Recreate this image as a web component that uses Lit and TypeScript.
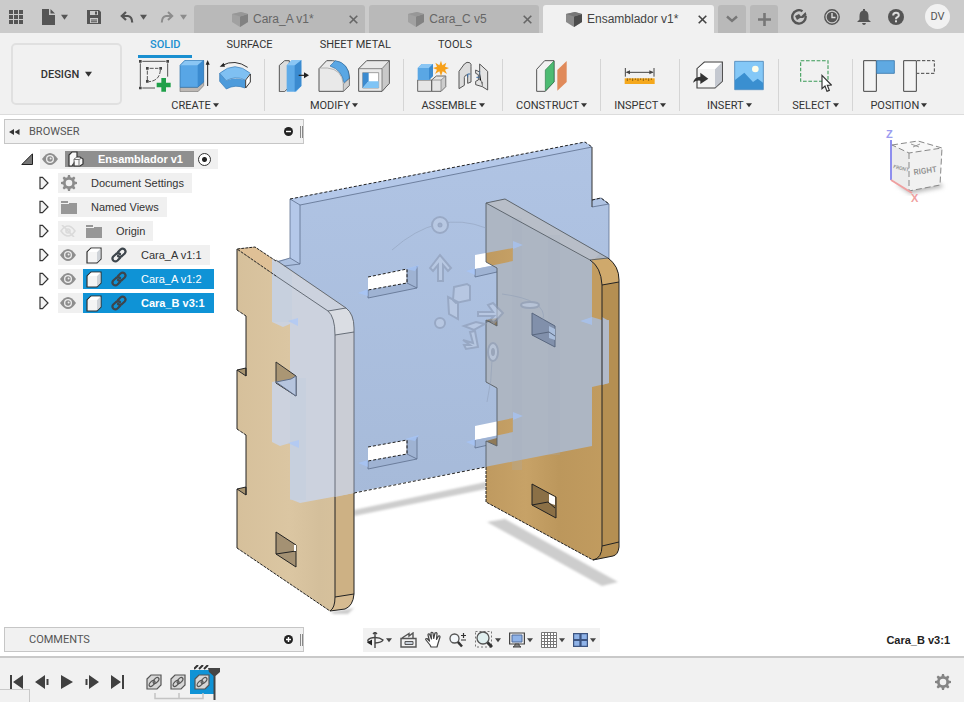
import { LitElement, html, svg, css, nothing, TemplateResult } from "lit";
import { customElement, property, state } from "lit/decorators.js";
import { classMap } from "lit/directives/class-map.js";

const icon = (w: number, h: number, viewBox: string, body: unknown) =>
  html`<svg width=${w} height=${h} viewBox=${viewBox} aria-hidden="true">${body}</svg>`;

const caret = (size = 7) => icon(size, 6, "0 0 8 6", svg`<path d="M0 0.5H8L4 6Z" fill="currentColor"/>`);

const gearPath =
  "M7 0h2l.5 2.2 1.500.6 2-1.200 1.400 1.400-1.200 2 .6 1.500 2.200.5v2l-2.200.5-.6 1.500 1.200 2-1.400 1.400-2-1.200-1.500.6L9 16H7l-.5-2.200-1.500-.6-2 1.200-1.400-1.400 1.200-2-.6-1.500L0 9V7l2.200-.5.6-1.500-1.200-2L3 1.600l2 1.200 1.500-.6ZM8 4.700a3.300 3.300 0 1 0 0 6.600a3.300 3.300 0 0 0 0-6.600Z";

const gear = (size: number) =>
  icon(size, size, "0 0 16 16", svg`<path fill="currentColor" fill-rule="evenodd" d=${gearPath}/>`);

/* ---------- top bar icons ---------- */
const gridIcon = icon(14, 14, "0 0 14 14", svg`<path fill="currentColor" d="M0 0h4v4H0zM5 0h4v4H5zM10 0h4v4h-4zM0 5h4v4H0zM5 5h4v4H5zM10 5h4v4h-4zM0 10h4v4H0zM5 10h4v4H5zM10 10h4v4h-4z"/>`);
const fileIcon = icon(13, 16, "0 0 13 16", svg`<path fill="currentColor" d="M0 0H7V6H13V16H0ZM8.500 0L13 4.500H8.500Z"/>`);
const saveIcon = icon(14, 14, "0 0 14 14", svg`<path fill="currentColor" fill-rule="evenodd" d="M0 0H12L14 2V14H0ZM3 1V5H11V1ZM3 8V13H11V8ZM8 1.500h2v3H8ZM4 9.500h6v1H4ZM4 11.300h6v1H4Z"/>`);
const undoIcon = icon(14, 12, "0 0 14 12", svg`<path fill="none" stroke="currentColor" stroke-width="2.200" d="M6 1L1.800 5L6 9M2 5H8Q12 5.500 12.200 11.500"/>`);
const redoIcon = icon(14, 12, "0 0 14 12", svg`<path fill="none" stroke="currentColor" stroke-width="2" d="M8 1L12.200 5L8 9M12 5H6Q2 5.500 1.800 11.500"/>`);
const docIcon = icon(16, 15, "0 0 16 15", svg`<path fill="#8a8a8a" d="M0 2L9 0L16 2V10L8 15L0 10Z"/><path fill="#4c4c4c" d="M8 4.500L16 2V10L8 15Z"/><path fill="#777" d="M0 2L9 0L16 2L8 4.500Z"/>`);
const crossIcon = icon(9, 9, "0 0 9 9", svg`<path stroke="currentColor" stroke-width="1.600" d="M.7.7L8.300 8.300M8.300.7L.7 8.300"/>`);
const chevronIcon = icon(12, 8, "0 0 12 8", svg`<path fill="none" stroke="currentColor" stroke-width="2.400" d="M1 1.500L6 6L11 1.500"/>`);
const plusIcon = icon(13, 13, "0 0 13 13", svg`<path stroke="currentColor" stroke-width="2.600" d="M6.500 0V13M0 6.500H13"/>`);
const syncIcon = icon(16, 16, "0 0 16 16", svg`<path fill="none" stroke="currentColor" stroke-width="2.400" d="M11.500 2.200A6.700 6.700 0 1 0 14.600 7"/><path fill="currentColor" d="M4 7L8 5L10 7.500L14.500 3L15.500 6L12 9L9 9L6 11Z"/>`);
const clockIcon = icon(16, 16, "0 0 16 16", svg`<circle cx="8" cy="8" r="7.200" fill="none" stroke="currentColor" stroke-width="1.400"/><circle cx="8" cy="8" r="5.300" fill="currentColor"/><path fill="none" stroke="#ddd" stroke-width="1.400" d="M8 4V8.500H11.500"/>`);
const bellIcon = icon(14, 16, "0 0 14 16", svg`<path fill="currentColor" d="M6 0H8V1.600Q11.500 2.500 11.500 7V10.500L14 13H0L2.500 10.500V7Q2.500 2.500 6 1.600ZM5 14H9Q8.500 16 7 16T5 14Z"/>`);
const helpIcon = icon(16, 16, "0 0 16 16", svg`<circle cx="8" cy="8" r="8" fill="currentColor"/><path fill="none" stroke="#ddd" stroke-width="2" d="M5.200 6.500Q5.200 3.800 8 3.800T10.800 6.200Q10.800 7.500 9 8.400Q8 9 8 10.200"/><rect x="7" y="11.300" width="2" height="2" fill="#ddd"/>`);

/* ---------- ribbon icons, drawn on a 96-unit grid ---------- */
const tool = (body: unknown) => icon(32, 32, "0 0 96 96", body);
const edge = "#555";

const sketchTool = tool(svg`
  <path fill="none" stroke="#555" stroke-width="3" d="M4 10V80M10 4H80M86 10V50M10 84H48"/>
  <path fill="none" stroke="#555" stroke-width="3" d="M25 32V62M32 25H58M64 30Q62 62 30 65" stroke-dasharray="12 4"/>
  <path fill="#444" d="M0 0h8v8H0zM82 0h8v8h-8zM0 80h8v8H0zM21 21h8v8h-8zM61 21h8v8h-8zM21 60h8v8h-8z"/>
  <path fill="#1fa049" d="M67 54H81V68H95V82H81V95H67V82H53V68H67Z"/>`);
const extrudeTool = tool(svg`
  <path fill="#bdb8b4" stroke="#777" stroke-width="2" d="M3 82H55L74 66V77L57 95H3Z"/>
  <path fill="#58a6e6" d="M3 16L18 0H74V66L56 82H3Z"/><path fill="#8ac6f4" d="M3 16L18 0H74L56 16Z"/>
  <path fill="#3b8bd0" d="M56 16L74 0V66L56 82Z"/><path fill="none" stroke="#2f6fa8" stroke-width="2" d="M3 16L18 1H74V66L56 82H3Z"/>
  <path stroke="#222" stroke-width="3" d="M86 10V78"/><path fill="#222" d="M86 0L92 14H80Z"/>`);
const revolveTool = tool(svg`
  <path fill="#4d9bdb" d="M2 40V64L22 87Q48 72 78 84V60Q50 50 22 62Z"/>
  <path fill="#7fc0f2" d="M2 40Q48 0 94 40L78 60Q50 46 22 62Z"/>
  <path fill="#fff" stroke="#333" stroke-width="3" d="M94 42V66L80 84V60Z"/>
  <path fill="none" stroke="#3579b5" stroke-width="2" d="M2 40V64L22 87Q48 72 78 84M2 40Q48 0 94 40M2 40L22 62Q50 46 78 60"/>
  <path fill="none" stroke="#333" stroke-width="3" d="M10 16Q48 -4 86 22"/><path fill="#222" d="M2 20L14 8L18 20Z"/>`);
const pressTool = tool(svg`
  <path fill="#ddd" stroke="#555" stroke-width="3" d="M4 95V16L20 2H34V80L20 95Z"/>
  <path fill="#5fabe8" d="M26 16L42 0H70V78L54 95H26Z"/><path fill="#3b8bd0" d="M50 16L70 0V78L50 95Z"/><path fill="#8ac6f4" d="M26 16L42 0H70L50 16Z"/>
  <path stroke="#222" stroke-width="3.500" d="M62 46H82"/><path fill="#222" d="M93 46L78 37V55Z"/>`);
const filletTool = tool(svg`
  <path fill="#e9e9e9" stroke="${edge}" stroke-width="3" d="M3 94V26L26 2H44Q94 6 95 58V76L76 94Z"/>
  <path fill="#cfcfcf" stroke="#777" stroke-width="2" d="M76 94V72L94 56V76Z"/>
  <path fill="none" stroke="#999" stroke-width="2" d="M6 24H28Q72 28 76 72"/>
  <path fill="#5aa7e4" stroke="#2f6fa8" stroke-width="2" d="M36 18L52 2Q92 8 94 54L78 68Q72 30 36 18Z"/>`);
const shellTool = tool(svg`
  <path fill="#e9e9e9" stroke="${edge}" stroke-width="3" d="M2 26L26 2H94V70L72 94H2Z"/>
  <path fill="#c9c9c9" stroke="${edge}" stroke-width="2" d="M72 26L94 2V70L72 94Z"/><path stroke="${edge}" stroke-width="2" d="M2 26H72"/>
  <path fill="#fff" stroke="#777" stroke-width="2" d="M14 38H62V84H14Z"/><path fill="#3b8bd0" d="M14 38H32V64L14 84Z"/><path fill="#7fc4f5" d="M32 64H62V84H14Z"/>`);
const componentTool = tool(svg`
  <path fill="#e6e6e6" stroke="#666" stroke-width="3" d="M2 60H44V94H2ZM44 60L58 48H86V80L72 94H44Z"/>
  <path fill="#ccc" stroke="#777" stroke-width="2" d="M72 60L86 48V80L72 94ZM72 60H44"/>
  <path fill="#5aa7e4" d="M2 24L14 12H48V48L36 60H2Z"/><path fill="#8ac6f4" d="M2 24L14 12H48L36 24Z"/><path fill="#3b8bd0" d="M36 24L48 12V48L36 60Z"/>
  <path fill="#f6a01a" d="M72 2L76 16L88 8L84 20L96 24L84 29L90 42L77 34L72 48L67 34L54 42L60 29L48 24L60 20L55 8L67 16Z"/>`);
const jointTool = tool(svg`
  <g stroke="#555" stroke-width="3"><path fill="#dcdcdc" d="M6 86V34L22 12Q30 4 38 8Q44 12 42 20V66L32 70V44Q24 44 22 52V76Z"/>
  <path fill="#e4e4e4" d="M56 30L68 36V12L92 34V90L76 80L56 74V64L64 60V44L56 40Z"/></g>
  <path fill="none" stroke="#3b6fa8" stroke-width="3" d="M40 42H32V52M68 34V52H58"/><path stroke="#777" stroke-width="2" d="M68 36V60L76 66V80"/>`);
const planeTool = tool(svg`
  <path fill="#f2f2f2" stroke="#555" stroke-width="3" d="M2 94V28L26 2H54V66L28 94Z"/>
  <path fill="#4dbb72" stroke="#2f7d4b" stroke-width="2" d="M28 92V30L54 3V66Z"/><path fill="#e08a5a" d="M64 92V30L92 3V66Z"/>`);
const measureTool = tool(svg`
  <path stroke="#444" stroke-width="3" d="M4 24V50M90 24V50M8 37H86"/><path fill="#444" d="M5 37L18 31V43ZM89 37L76 31V43Z"/>
  <path fill="#f5a81c" d="M2 55H92V72H2Z"/><path stroke="#7d5510" stroke-width="2.500" d="M10 55v8M18 55v5M26 55v8M34 55v5M42 55v8M50 55v5M58 55v8M66 55v5M74 55v8M82 55v5"/>`);
const insertTool = tool(svg`
  <path fill="#f4f4f4" stroke="#444" stroke-width="3.500" d="M12 84V26L34 6H88V64L66 84Z"/><path fill="#c4c8d0" d="M66 28L86 8V64L66 83Z"/><path fill="#fff" d="M14 27L34 9H84L66 27Z"/>
  <path fill="#333" d="M0 68Q4 50 22 50V38L46 56L22 72V62Q10 60 0 68Z"/>`);
const imageTool = tool(svg`
  <path fill="#84c8f7" stroke="#4a86b8" stroke-width="2.500" d="M5 4H91V89H5Z"/><path fill="#3a8fd0" d="M6 60L34 38L60 66L74 56L90 68V88H6Z"/><circle cx="67" cy="27" r="10" fill="#fffde8"/>`);
const selectTool = tool(svg`
  <path fill="none" stroke="#3a9b57" stroke-width="3.200" stroke-dasharray="11 5" d="M2 2H84V64H2Z"/>
  <path fill="#fff" stroke="#333" stroke-width="3.500" d="M66 46V86L75 78L81 94L88 91L82 76L94 75Z"/>`);
const captureTool = tool(svg`
  <path fill="#f4f4f4" stroke="#444" stroke-width="3" d="M2 2H40V94H2Z"/><path fill="#5fa9e2" stroke="#3a78ae" stroke-width="2.500" d="M41 2H94V40H41Z"/>`);
const revertTool = tool(svg`
  <path fill="#f4f4f4" stroke="#444" stroke-width="3" d="M2 2H40V94H2Z"/><path fill="none" stroke="#444" stroke-width="3" stroke-dasharray="10 5" d="M42 2H94V40H42"/>`);

/* ---------- browser icons ---------- */
const eyeIcon = icon(16, 12, "0 0 16 12", svg`<path fill="#8e8e8e" d="M0 6Q8 -6 16 6Q8 18 0 6Z"/><circle cx="8" cy="6" r="4" fill="#eee"/><circle cx="8" cy="6" r="2.700" fill="#8e8e8e"/><circle cx="8.600" cy="5.600" r="1" fill="#eee"/>`);
const eyeOffIcon = icon(16, 12, "0 0 16 12", svg`<g fill="none" stroke="#dadada" stroke-width="1.600"><path d="M1 6Q8 -4 15 6Q8 16 1 6Z"/><circle cx="8" cy="6" r="2"/><path d="M2 0L14 12"/></g>`);
const folderIcon = icon(16, 13, "0 0 16 13", svg`<path fill="#979797" d="M0 0H7V2H0ZM0 3H8V2H16V13H0Z"/>`);
const cubeIcon = icon(16, 17, "0 0 16 17", svg`<path fill="#f4f4f4" stroke="#333" stroke-width="1.200" d="M1 5L5 1H15V12L11 16H1Z"/><path fill="#cfd3d8" d="M11 5L14.500 1.500V12L11 15.500Z"/><path fill="#fff" d="M1.800 5L5 1.700H14L11 5Z"/>`);
const assemblyIcon = icon(16, 16, "0 0 16 16", svg`<path fill="#f8f8f8" stroke="#333" stroke-width="1.200" d="M1 15V4L4 1H9V6H12L15 8V13L12 15H6V12L4 15Z"/><path fill="none" stroke="#777" d="M6 14V8L9 6M6 8.500H11V15M11 8.500L14 7"/>`);
const linkIcon = icon(16, 16, "0 0 16 16", svg`<g fill="none" stroke="#3d454c" stroke-width="2.200" stroke-linecap="round"><path d="M7 5L9.500 2.500Q11.500.8 13.600 2.400Q15.500 4.500 13.700 6.500L11 9Q9 10.500 7 9"/><path d="M9 11L6.500 13.500Q4.500 15.200 2.400 13.600Q.5 11.500 2.300 9.500L5 7Q7 5.500 9 7"/></g>`);
const openTwist = icon(12, 12, "0 0 12 12", svg`<path fill="#777" stroke="#222" d="M11.500.8V11.500H.8Z"/>`);
const shutTwist = icon(10, 14, "0 0 10 14", svg`<path fill="#f4f4f4" stroke="#333" stroke-width="1.200" d="M1 1.300H3.500L9 7L3.500 12.700H1Z"/>`);
const rewindIcon = icon(11, 6, "0 0 11 6", svg`<path fill="#333" d="M5 0V6L0 3ZM10.500 0V6L5.500 3Z"/>`);
const minusDot = icon(9, 9, "0 0 9 9", svg`<circle cx="4.500" cy="4.500" r="4.500" fill="#222"/><path stroke="#fff" stroke-width="1.400" d="M2 4.500H7"/>`);
const plusDot = icon(9, 9, "0 0 9 9", svg`<circle cx="4.500" cy="4.500" r="4.500" fill="#222"/><path stroke="#fff" stroke-width="1.400" d="M2 4.500H7M4.500 2V7"/>`);

/* ---------- navigation icons ---------- */
const orbitIcon = icon(18, 16, "0 0 18 16", svg`<g fill="none" stroke="#444" stroke-width="1.400"><path d="M9 0V16M7 2L9 0L11 2"/><path d="M5 11Q1 10 2 8Q4 5.500 9 5.500T17 8Q16 10.500 9 11"/></g><path fill="#222" d="M1 10.500L6 7.500V13.500Z"/>`);
const lookIcon = icon(17, 16, "0 0 17 16", svg`<path fill="none" stroke="#555" stroke-width="1.400" d="M1 6.500H16V15H1ZM2 6L9 1.500V4L13 1V6"/><path fill="#c5cdd8" stroke="#555" d="M5 9.500H13V12.500H5Z"/>`);
const panIcon = icon(16, 17, "0 0 16 17", svg`<path fill="#fff" stroke="#444" stroke-width="1.200" stroke-linejoin="round" d="M5 14L1 9Q0 7.500 2 7.500L4.500 10L3 4Q3 2.500 4.500 3L6.500 8L6 2Q6.500.500 8 2L8.700 7.500L10 2Q11.500 1 12 2.500L11.500 8.500L13.500 5Q15 4.500 15 6L13 12.500L12 16H6Z"/>`);
const zoomIcon = icon(18, 16, "0 0 18 16", svg`<circle cx="5.500" cy="6.500" r="4.500" fill="#f4f8fb" stroke="#555" stroke-width="1.300"/><path stroke="#333" stroke-width="2.500" d="M8.800 9.800L13 14.500"/><path stroke="#333" stroke-width="1.200" d="M12 3.500H17M14.500 1V6M12 8H17"/>`);
const fitIcon = icon(18, 17, "0 0 18 17", svg`<path fill="none" stroke="#777" stroke-dasharray="2 2" d="M.500.500H16.500V16H.500Z"/><circle cx="8" cy="7" r="6" fill="#e0efef" stroke="#555" stroke-width="1.300"/><path stroke="#333" stroke-width="3" d="M12.500 11.500L17 16"/>`);
const displayIcon = icon(16, 16, "0 0 16 16", svg`<path fill="#eee" stroke="#444" stroke-width="1.200" d="M.600 1H15.400V12H.600Z"/><path fill="#8fb3e8" stroke="#4f6b9b" d="M3 3H13V10H3Z"/><path fill="#888" stroke="#444" d="M6 12H10V13.500L12 15H4L6 13.500Z"/>`);
const meshIcon = icon(16, 16, "0 0 16 16", svg`<path fill="#fff" stroke="#777" stroke-width="1" d="M.500.500H15.500V15.500H.500ZM3.500 0V16M6.500 0V16M9.500 0V16M12.500 0V16M0 3.500H16M0 6.500H16M0 9.500H16M0 12.500H16"/>`);
const panesIcon = icon(15, 14, "0 0 15 14", svg`<path fill="#8fb3e8" stroke="#3c5480" stroke-width="1.200" d="M.600.600H7V6.500H.600ZM8 .600H14.400V6.500H8ZM.600 7.500H7V13.400H.600ZM8 7.500H14.400V13.400H8Z"/>`);

/* ---------- timeline icons ---------- */
const play = (body: unknown) => icon(14, 14, "0 0 14 14", svg`<g fill="#404040">${body}</g>`);
const featureIcon = icon(16, 16, "0 0 16 16", svg`<path fill="#d6d6d6" stroke="#555" stroke-width="1.200" d="M1 5L5 1H15V11L11 15H1Z"/><g fill="none" stroke="#555" stroke-width="1.200"><ellipse cx="6" cy="9.500" rx="3.600" ry="2" transform="rotate(-45 6 9.500)"/><ellipse cx="10" cy="6.500" rx="3.600" ry="2" transform="rotate(-45 10 6.500)"/></g>`);

/* ---------- model ---------- */
const plate =
  "M290 199L585 142L592 147V200L601 198L609 204V383L592 387V446L300 503L290 499V443L280 446L272 442V382L290 378V324L283 327L272 322V262L290 258Z" +
  "M368 277V290L407 283V269ZM368 447V461L407 454V440ZM475 255V269L513 261V248ZM475 426V440L513 432V418Z";
const rightPanel =
  "M486 203L505 199L608 258Q619 266 619 280V547Q618 555 613 556L593 560L486 502V441L497 446V388L486 382V320L497 326V268L486 262Z";
const leftPanel =
  "M237 249L255 247L346 308Q354 314 354 328V594Q353 606 345 609L330 611L237 548V489L246 495V435L237 429V370L246 376V316L237 310Z";

const scene = html`<svg class="scene" viewBox="0 115 964 541" role="img" aria-label="Ensamblador v1 model">
  <defs>
    <clipPath id="right"><path d=${rightPanel} /></clipPath>
    <clipPath id="left"><path d=${leftPanel} /></clipPath>
    <linearGradient id="wood" x1="0" x2="1"><stop offset="0" stop-color="#bf9a60" /><stop offset=".3" stop-color="#c7a267" /><stop offset=".55" stop-color="#bc975c" /><stop offset="1" stop-color="#c39d60" /></linearGradient>
    <linearGradient id="pale" x1="0" x2="1"><stop offset="0" stop-color="#d6c09b" /><stop offset=".45" stop-color="#dbc6a2" /><stop offset=".7" stop-color="#d4bf9b" /><stop offset="1" stop-color="#d8c29c" /></linearGradient>
    <linearGradient id="blue" x1="0" y1="0" x2="0" y2="1"><stop offset="0" stop-color="#b0c4e4" /><stop offset="1" stop-color="#a6bad9" /></linearGradient>
    <filter id="soft"><feGaussianBlur stdDeviation="1" /></filter>
  </defs>
  <g fill="#cdcdcd" filter="url(#soft)">
    <path d="M354 510L486 482V489L354 516Z" /><path d="M487 522L505 519L618 582L602 586Z" /><path d="M330 612L354 608L348 614H334Z" />
  </g>
  <path fill="url(#blue)" fill-rule="evenodd" d=${plate} />
  <path fill="#b4c8e9" d="M290 199L585 142L592 147L300 205V264L290 258Z" />
  <g fill="#9fb3d3"><path d="M407 269L417 266V288L407 283ZM368 290L407 283L417 288L368 298Z" /><path d="M407 440L417 437V459L407 454ZM368 461L407 454L417 459L368 469Z" /><path d="M475 269L497 265V272L475 277ZM475 440L497 436V443L475 448Z" /></g>
  <g fill="none" stroke="#5d6f8d" stroke-width=".8">
    <path d="M290 199V258L300 264V205L592 147M290 199L300 205M290 258L277 262M300 264L284 266M592 207L609 204V262M592 200L601 198L609 204" />
    <path d="M368 290V298L417 288V266M407 269V283L417 288M368 461V469L417 459V437M407 440V454L417 459M475 269V277L497 272M475 440V448L497 443" />
  </g>
  <path fill="none" stroke="#222" stroke-width="1" stroke-dasharray="3 2" d="M290 199L585 142L592 147M592 200L601 198L609 204M368 277L407 269V283L368 290M368 447L407 440V454L368 461M354 493L486 467" />
  <path stroke="#333" d="M592 147V207" />

  <path fill="#8f7a58" d="M486 320L497 318V326ZM486 441L497 438V446Z" />
  <path fill="url(#wood)" d=${rightPanel} />
  <path fill="#b58f52" d="M590 260L608 258Q619 266 619 280V547Q618 555 613 556L593 560Q602 558 602 546V285Q601 267 590 260Z" />
  <path fill="#cfa96c" d="M590 260L608 258Q618 265 619 282L602 285Q601 267 590 260Z" />
  <g clip-path="url(#right)">
    <path fill="#adb6c3" fill-rule="evenodd" d=${plate} />
    <path fill="#b8bec8" d="M486 203L505 199L600 253L592 262L588 260Z" />
    <path fill="#a4aebc" opacity=".2" d="M512 218H522V470H512ZM548 235H560V455H548Z" />
    <path fill="#c29c60" d="M592 261Q601 269 602 285V320L592 317Z" />
    <path fill="#b58f52" d="M602 262H612V320H602Z" /><path fill="#cfa96c" d="M592 259L608 258Q618 265 619 282L602 285Q601 269 592 261Z" />
    <path fill="#b2bac9" d="M602 317L609 321V383L602 385Z" />
  </g>
  <g fill="none" stroke="#555d66" stroke-width=".9"><path d="M486 262V203L505 199L608 258M486 203L590 260L608 258M486 262L497 268V326L486 320V382L497 388V446L486 441V467M486 322L497 320" /></g>
  <g fill="none" stroke="#222" stroke-width="1"><path d="M590 260Q601 267 602 285V546Q602 558 593 560M602 285L619 282M602 546L619 542M608 258Q619 266 619 280V547Q618 555 613 556L593 560" /><path stroke-dasharray="3 1" d="M486 467V502L593 560" /></g>
  <path fill="#8190ab" stroke="#59677f" d="M532 313L555 326V347L532 335Z" /><path fill="#a9bddb" d="M549 326L555 329V340L549 338Z" /><path fill="none" stroke="#59677f" d="M532 335L549 332L555 336" />
  <path fill="#8b7046" stroke="#222" d="M532 484L556 497V518L532 505Z" /><path fill="#fff" d="M549 494L555 497V505L549 503Z" /><path fill="none" stroke="#222" d="M532 505L548 502L555 508" />

  <path fill="#a8946f" d="M237 370L246 368V376ZM237 489L246 487V495Z" />
  <path fill="url(#pale)" d=${leftPanel} />
  <path fill="#dfc096" d="M237 249L255 247L346 308L328 311Z" />
  <path fill="#cdb184" d="M335 335L354 332V594L335 597Z" /><path fill="#d6bb91" d="M335 597L354 594Q353 606 345 609L330 611Q335 607 335 597Z" />
  <g clip-path="url(#left)">
    <path fill="#ccd2de" d="M272 240H360V492L300 503L290 499V443L280 446L272 442V382L290 378V324L283 327L272 322Z" />
    <path fill="#c3cddf" opacity=".55" d="M272 262H292V322H272ZM290 378H306V500H290Z" />
    <path fill="#cacdd5" d="M335 335L354 332V493L335 497Z" /><path fill="#dadde3" d="M328 311L346 308Q354 316 354 332L335 335Q335 318 328 311Z" />
  </g>
  <g fill="none" stroke="#59616b" stroke-width=".9"><path d="M276 276L328 311Q335 317 335 335V497M328 311L346 308M335 335L354 332M276 260L346 308Q354 314 354 328V493" /></g>
  <g fill="none" stroke="#222" stroke-width="1"><path d="M335 497V597Q335 608 330 611M335 597L354 594M354 493V594Q353 606 345 609L330 611M237 249V310M246 316V376L237 370V429M246 435V495L237 489V548M237 370L246 368V376M237 489L246 487V495" /><path stroke-dasharray="3 1" d="M276 261L255 247L237 249L276 276M237 310L246 316M237 429L246 435M237 548L330 611" /></g>
  <path fill="#aa9674" stroke="#333" d="M276 362L296 376V396L276 383Z" /><path fill="#b6c5de" stroke="#60708c" d="M276 382L291 379L296 376V396Z" />
  <path fill="#a49173" stroke="#222" d="M276 532L296 545V567L276 554Z" /><path fill="none" stroke="#222" d="M276 554L296 551" /><path fill="#fff" d="M294 545h2v6h-2z" />

  <g fill="#a5c6ff" opacity=".6"><path d="M405 269L419 265L415 271ZM358 293L368 289V296ZM405 439L419 435L415 441ZM358 463L368 460V467ZM513 241L523 245L513 249ZM513 412L523 416L513 420ZM466 271L475 268V275ZM466 442L475 439V446ZM580 321L592 317V325ZM288 321L298 318V326ZM288 443L299 440V448Z" /></g>
  <g fill="none" stroke="#8c9ab4" stroke-width="2" opacity=".6">
    <path d="M392 250Q438 209 486 228M502 294Q548 300 543 320M492 360Q492 380 487 402" stroke-width=".8" />
    <g fill="#bfcde4"><circle cx="440" cy="225" r="8" /><circle cx="440" cy="225" r="1.500" /><circle cx="440" cy="323" r="5" />
      <path d="M430 268L440 255L451 268L448 271L443 265V281H438V265L433 271ZM478 312H493L488 305L493 303L503 313L494 323L490 320L494 316H478Z" />
      <path d="M454 287L467 284L470 286V300L456 303L453 300ZM448 297L458 302V319L449 314Z" /><ellipse cx="530" cy="305" rx="9" ry="3" /><ellipse cx="493" cy="352" rx="5" ry="9" /><ellipse cx="493" cy="352" rx="1" ry="3" />
      <path d="M464 326L476 322L485 324L474 330ZM463 340L473 343L470 332L475 331L478 347L466 349L464 345L470 345Z" /></g>
  </g>
</svg>`;

const viewCube = html`<svg class="cube" width="68" height="84" viewBox="882 122 68 84" role="img" aria-label="View cube">
  <defs><filter id="blur"><feGaussianBlur stdDeviation="2" /></filter></defs>
  <path fill="#bbb" filter="url(#blur)" d="M896 184L910 194L944 187L938 182Z" />
  <path fill="#ececec" d="M892 145L909 153V191L892 181Z" /><path fill="#f1f1f1" d="M909 153L942 148L940 185L909 191Z" /><path fill="#f8f8f8" d="M892 145L918 141L942 148L909 153Z" />
  <path fill="none" stroke="#888" stroke-dasharray="6 3" d="M892 145L918 141L942 148L909 153ZM909 153V191L940 185L942 148" /><path fill="none" stroke="#999" d="M911 144L919 147M920 144L913 147" />
  <path stroke="#8e8eee" stroke-width="2" d="M891 140V180" /><path stroke="#efa0a0" stroke-width="2" d="M891 180L912 193" />
  <text x="914" y="175" class="face" transform="rotate(-8 914 175)">RIGHT</text>
  <text x="893" y="168" class="face small" transform="rotate(14 893 168)">FRONT</text>
  <text x="886" y="138" class="axis z">Z</text><text x="911" y="202" class="axis x">X</text>
</svg>`;

interface Group { label: string; tools: [string, TemplateResult][]; }
const groups: Group[] = [
  { label: "CREATE", tools: [["Create Sketch", sketchTool], ["Extrude", extrudeTool], ["Revolve", revolveTool]] },
  { label: "MODIFY", tools: [["Press Pull", pressTool], ["Fillet", filletTool], ["Shell", shellTool]] },
  { label: "ASSEMBLE", tools: [["New Component", componentTool], ["Joint", jointTool]] },
  { label: "CONSTRUCT", tools: [["Offset Plane", planeTool]] },
  { label: "INSPECT", tools: [["Measure", measureTool]] },
  { label: "INSERT", tools: [["Insert Derive", insertTool], ["Decal", imageTool]] },
  { label: "SELECT", tools: [["Select", selectTool]] },
  { label: "POSITION", tools: [["Capture Position", captureTool], ["Revert", revertTool]] },
];

const reset = css`
  :host { font-family: Roboto, "Liberation Sans", sans-serif; font-size: 11px; color: #333; }
  * { box-sizing: border-box; }
  button { font: inherit; color: inherit; background: none; border: 0; padding: 0; margin: 0; display: flex; align-items: center; justify-content: center; white-space: nowrap; }
  svg { display: block; flex: none; }
  ul { list-style: none; margin: 0; padding: 0; }
`;

@customElement("title-bar")
class TitleBar extends LitElement {
  @state() private active = 2;
  static styles = [reset, css`
    :host { display: flex; height: 33px; background: #cbcbcb; color: #555; }
    .quick { display: flex; align-items: center; width: 194px; padding-left: 9px; gap: 19px; }
    .pair { gap: 6px; }
    .faded { color: #8c8c8c; margin-left: -6px; }
    .tabs { display: flex; flex: 1; gap: 4px; padding-top: 5px; }
    .tab { flex: 1; display: flex; align-items: center; background: #b9b9b9; border-radius: 3px 3px 0 0; padding: 0 7px 0 3px; color: #666; font: 12px "Liberation Sans", sans-serif; }
    .tab .name { flex: 1; gap: 5px; height: 28px; }
    .tab .name svg { opacity: .5; }
    .tab.active { background: #f1f1f1; color: #444; }
    .tab.active .name svg { opacity: 1; }
    .extra { display: flex; gap: 4px; padding: 5px 0 0 4px; }
    .extra button { width: 28px; height: 28px; background: #b9b9b9; color: #777; border-radius: 3px 3px 0 0; }
    .account { display: flex; align-items: center; gap: 17px; padding: 0 14px 0 13px; }
    .avatar { width: 25px; height: 25px; border-radius: 50%; background: #f1f1f1; margin-left: 4px; }
  `];
  render() {
    const names = ["Cara_A v1*", "Cara_C v5", "Ensamblador v1*"];
    return html`
      <div class="quick">
        <button aria-label="Data panel">${gridIcon}</button>
        <button class="pair" aria-label="File">${fileIcon}${caret()}</button>
        <button aria-label="Save">${saveIcon}</button>
        <button class="pair" aria-label="Undo">${undoIcon}${caret()}</button>
        <button class="pair faded" aria-label="Redo">${redoIcon}${caret()}</button>
      </div>
      <div class="tabs">
        ${names.map((n, i) => html`<div class=${classMap({ tab: true, active: i === this.active })}>
          <button class="name" @click=${() => (this.active = i)}>${docIcon}<span>${n}</span></button>
          <button aria-label="Close ${n}">${crossIcon}</button>
        </div>`)}
      </div>
      <div class="extra"><button aria-label="All tabs">${chevronIcon}</button><button aria-label="New design">${plusIcon}</button></div>
      <div class="account">
        <button aria-label="Extensions">${syncIcon}</button><button aria-label="Job status">${clockIcon}</button>
        <button aria-label="Notifications">${bellIcon}</button><button aria-label="Help">${helpIcon}</button>
        <button class="avatar">DV</button>
      </div>`;
  }
}

@customElement("tool-ribbon")
class ToolRibbon extends LitElement {
  @state() private tab = "SOLID";
  static styles = [reset, css`
    :host { display: flex; height: 82px; background: #f1f1f1; border-bottom: 1px solid #dcdcdc; padding-left: 11px; }
    .design { width: 111px; height: 62px; margin-top: 10px; border: 2px solid #e0e0e0; border-radius: 5px; font-weight: 500; gap: 6px; }
    .main { display: flex; flex-direction: column; margin-left: 4px; }
    .tabs { display: flex; height: 24px; padding-left: 12px; gap: 32px; }
    .tabs button { height: 25px; border-bottom: 3px solid transparent; padding: 0 2px; }
    .tabs .on { color: #1a8fd0; border-color: #1a8fd0; font-weight: 500; padding: 0 12px; }
    .tabs button:nth-child(n + 3) { margin-left: 11px; }
    .groups { display: flex; margin-top: 2px; }
    .group { padding: 1px 13px 0; border-right: 1px solid #d5d5d5; height: 52px; }
    .group:last-child { border: 0; padding: 1px 10px 0; }
    .tools { display: flex; gap: 8px; justify-content: center; }
    .label { width: 100%; height: 20px; gap: 2px; margin-top: 3px; }
  `];
  render() {
    return html`
      <button class="design">DESIGN ${caret()}</button>
      <div class="main">
        <div class="tabs">
          ${["SOLID", "SURFACE", "SHEET METAL", "TOOLS"].map((t) => html`
            <button class=${classMap({ on: t === this.tab })} @click=${() => (this.tab = t)}>${t}</button>`)}
        </div>
        <div class="groups">
          ${groups.map((g) => html`<div class="group">
            <div class="tools">${g.tools.map(([name, art]) => html`<button aria-label=${name}>${art}</button>`)}</div>
            <button class="label">${g.label} ${caret(6)}</button>
          </div>`)}
        </div>
      </div>`;
  }
}

interface Node { label: string; kind: "settings" | "folder" | "part"; eye?: "on" | "off"; selected?: boolean; bold?: boolean; }
const nodes: Node[] = [
  { label: "Document Settings", kind: "settings" },
  { label: "Named Views", kind: "folder" },
  { label: "Origin", kind: "folder", eye: "off" },
  { label: "Cara_A v1:1", kind: "part", eye: "on" },
  { label: "Cara_A v1:2", kind: "part", eye: "on", selected: true },
  { label: "Cara_B v3:1", kind: "part", eye: "on", selected: true, bold: true },
];

@customElement("side-panel")
class SidePanel extends LitElement {
  @property() label = "";
  @property({ type: Boolean }) open = false;
  static styles = [reset, css`
    :host { display: flex; align-items: center; width: 300px; height: 25px; background: #f1f1f1; border: 1px solid #c6c6c6; color: #555; padding-left: 4px; }
    .rewind { width: 11px; margin-right: 9px; }
    .title { flex: 1; }
    .grip { width: 3px; height: 12px; border: 1px solid #888; border-width: 0 1px; margin-left: 7px; }
  `];
  render() {
    return html`<button class="rewind" aria-label="Collapse">${this.open ? rewindIcon : nothing}</button>
      <span class="title">${this.label}</span>
      <button aria-label="Toggle ${this.label}">${this.open ? minusDot : plusDot}</button><span class="grip"></span>`;
  }
}

@customElement("browser-tree")
class BrowserTree extends LitElement {
  static styles = [reset, css`
    :host { display: block; padding: 5px 0 0 21px; font-family: "Liberation Sans", sans-serif; }
    li { display: flex; align-items: center; height: 20px; margin-bottom: 4px; }
    .twist { width: 12px; margin-right: 7px; }
    .child .twist { width: 10px; margin: 0 9px 0 18px; }
    .body { display: flex; align-items: center; height: 20px; background: #f0f0f0; }
    .eye { width: 22px; padding-left: 2px; justify-content: flex-start; margin-right: 3px; }
    .item { display: flex; align-items: center; height: 20px; padding: 0 8px 0 3px; }
    .item span { margin-left: 14px; }
    .item svg + svg { margin-left: 9px; }
    .selected { background: #0f93d6; color: #fff; padding-right: 12px; }
    .bold { font-weight: bold; padding-right: 9px; }
    .root { background: #8f8f8f; color: #fff; font-weight: bold; height: 16px; padding-right: 11px; }
    .radio { appearance: none; width: 13px; height: 13px; margin: 0 7px 0 4px; border: 1px solid #333; border-radius: 50%; background: radial-gradient(circle, #222 0 2px, #fff 3px); }
    .gear { color: #8c8c8c; }
  `];
  private art(n: Node) {
    if (n.kind === "settings") return gear(16);
    if (n.kind === "folder") return folderIcon;
    return html`${cubeIcon}${linkIcon}`;
  }
  render() {
    return html`<ul>
      <li><button class="twist" aria-label="Collapse">${openTwist}</button>
        <div class="body"><button class="eye" aria-label="Hide">${eyeIcon}</button>
          <div class="item root">${assemblyIcon}<span>Ensamblador v1</span></div>
          <input class="radio" type="radio" checked aria-label="Activate Ensamblador v1" /></div></li>
      ${nodes.map((n) => html`<li class="child"><button class="twist" aria-label="Expand ${n.label}">${shutTwist}</button>
        <div class="body">
          ${n.eye ? html`<button class="eye" aria-label="Visibility of ${n.label}">${n.eye === "on" ? eyeIcon : eyeOffIcon}</button>` : nothing}
          <div class=${classMap({ item: true, selected: !!n.selected, bold: !!n.bold })}>
            ${n.kind === "settings" ? html`<b class="gear">${this.art(n)}</b>` : this.art(n)}<span>${n.label}</span>
          </div>
        </div></li>`)}
    </ul>`;
  }
}

@customElement("nav-bar")
class NavBar extends LitElement {
  static styles = [reset, css`
    :host { display: flex; align-items: center; height: 24px; background: #f1f1f1; padding: 0 4px 0 3px; gap: 8px; color: #444; }
    button { gap: 2px; height: 24px; }
  `];
  render() {
    return html`<button aria-label="Orbit">${orbitIcon}${caret(6)}</button>
      <button aria-label="Look At">${lookIcon}</button><button aria-label="Pan">${panIcon}</button><button aria-label="Zoom">${zoomIcon}</button>
      <button aria-label="Fit">${fitIcon}${caret(6)}</button>
      <button aria-label="Display Settings">${displayIcon}${caret(6)}</button>
      <button aria-label="Grid and Snaps">${meshIcon}${caret(6)}</button>
      <button aria-label="Viewports">${panesIcon}${caret(6)}</button>`;
  }
}

@customElement("time-line")
class TimeLine extends LitElement {
  static styles = [reset, css`
    :host { display: flex; align-items: center; height: 46px; background: #f1f1f1; border-top: 2px solid #c9c9c9; padding: 4px 13px 0 10px; position: relative; }
    .transport { display: flex; gap: 11px; }
    .features { display: flex; align-items: center; margin-left: 18px; position: relative; }
    .features button { width: 24px; height: 24px; }
    .features .current { background: #0f93d6; }
    .marker { position: absolute; right: -6px; top: -5px; }
    .links { position: absolute; left: 12px; top: 22px; }
    .settings { margin-left: auto; color: #858585; }
    .corner { position: absolute; left: 0; bottom: 0; width: 30px; height: 13px; border: 1px solid #c9c9c9; border-width: 1px 1px 0 0; }
  `];
  render() {
    return html`<span class="corner"></span>
      <div class="transport">
        <button aria-label="To start">${play(svg`<path d="M0 0h2v14H0zM13 0V14L3 7Z"/>`)}</button>
        <button aria-label="Step back">${play(svg`<path d="M10 0V14L0 7ZM11.500 4H13.500V10H11.500Z"/>`)}</button>
        <button aria-label="Play">${play(svg`<path d="M1 0L13 7L1 14Z"/>`)}</button>
        <button aria-label="Step forward">${play(svg`<path d="M4 0V14L14 7ZM.500 4H2.500V10H.500Z"/>`)}</button>
        <button aria-label="To end">${play(svg`<path d="M12 0h2v14h-2zM1 0V14L11 7Z"/>`)}</button>
      </div>
      <div class="features">
        <svg class="links" width="52" height="8" viewBox="0 0 52 8"><path fill="none" stroke="#c4c4c4" stroke-width="1.500" d="M1 1V6.500H49V1M25 1V6.500"/></svg>
        <button aria-label="Insert Cara_A v1:1">${featureIcon}</button>
        <button aria-label="Insert Cara_A v1:2">${featureIcon}</button>
        <button class="current" aria-label="Insert Cara_B v3:1">${featureIcon}</button>
        <svg class="marker" width="26" height="36" viewBox="0 0 26 36"><path fill="#444" d="M14 3H26V7L21.500 11V35H19.500V11L15 7Z"/><path stroke="#333" stroke-width="2" d="M0 4L4 0M5 4L9 0M10 4L14 0"/></svg>
      </div>
      <button class="settings" aria-label="Timeline settings">${gear(16)}</button>`;
  }
}

@customElement("app-root")
class AppRoot extends LitElement {
  static styles = [reset, css`
    :host { display: flex; flex-direction: column; min-height: 100vh; background: #fff; }
    .canvas { flex: 1; position: relative; display: flex; flex-direction: column; padding: 4px; background: #fff; }
    .scene { position: absolute; inset: 0; width: 100%; height: 100%; pointer-events: none; }
    .cube { position: absolute; right: 14px; top: 7px; }
    .face { font: 500 8px Roboto, sans-serif; fill: #8d8d8d; }
    .small { font-size: 5px; }
    .axis { font: bold 11px "Liberation Sans", sans-serif; }
    .z { fill: #9c9cf0; }
    .x { fill: #f0a0a0; }
    side-panel, browser-tree, .foot { position: relative; }
    browser-tree { margin-left: -4px; }
    .foot { display: flex; align-items: center; margin-top: auto; }
    .foot nav-bar { margin-left: 59px; }
    .selection { margin-left: auto; padding-right: 10px; font: bold 11px "Liberation Sans", sans-serif; color: #222; }
  `];
  render() {
    return html`<title-bar></title-bar>
      <tool-ribbon></tool-ribbon>
      <main class="canvas">
        ${scene}${viewCube}
        <side-panel label="BROWSER" open></side-panel>
        <browser-tree></browser-tree>
        <div class="foot"><side-panel label="COMMENTS"></side-panel><nav-bar></nav-bar><span class="selection">Cara_B v3:1</span></div>
      </main>
      <time-line></time-line>`;
  }
}
